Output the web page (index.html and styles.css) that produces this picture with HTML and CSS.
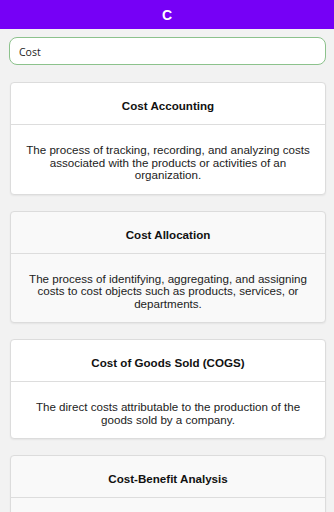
FILE: index.html
```html
<!DOCTYPE html>
<html lang="en">
<head>
<meta charset="utf-8">
<title>C</title>
<link rel="stylesheet" href="styles.css">
</head>
<body>
<header class="topbar">C</header>
<main class="content">
  <div class="search"><input class="search-input" type="text" value="Cost"></div>
  <section class="card">
    <h2 class="card-title">Cost Accounting</h2>
    <p class="card-body">The process of tracking, recording, and analyzing costs associated with the products or activities of an organization.</p>
  </section>
  <section class="card alt">
    <h2 class="card-title">Cost Allocation</h2>
    <p class="card-body">The process of identifying, aggregating, and assigning costs to cost objects such as products, services, or departments.</p>
  </section>
  <section class="card">
    <h2 class="card-title">Cost of Goods Sold (COGS)</h2>
    <p class="card-body">The direct costs attributable to the production of the goods sold by a company.</p>
  </section>
  <section class="card alt">
    <h2 class="card-title">Cost-Benefit Analysis</h2>
    <p class="card-body">A systematic approach to estimating the strengths and weaknesses of alternatives to determine the best option.</p>
  </section>
  <section class="card">
    <h2 class="card-title">Cost Center</h2>
    <p class="card-body">A department or function within an organization that incurs costs but does not directly generate revenue.</p>
  </section>
</main>
</body>
</html>
```
FILE: styles.css
```css
html {
  background: #f2f2f2;
}
html::-webkit-scrollbar {
  width: 5px;
}
html::-webkit-scrollbar-track {
  background: #f2f2f2;
}
html::-webkit-scrollbar-thumb {
  background: #b9b9b9;
  border-left: 2px solid #f2f2f2;
  border-right: 1px solid #f2f2f2;
}
body {
  margin: 0;
  font-family: "Liberation Sans", Arial, sans-serif;
  color: #222;
}
.topbar {
  height: 29px;
  background: #7600f6;
  color: #fff;
  font-weight: bold;
  font-size: 14px;
  display: flex;
  align-items: center;
  justify-content: center;
}
.content {
  padding: 8px 4px 16px 10px;
  display: flex;
  flex-direction: column;
  gap: 16px;
}
.search {
  margin-left: -1px;
  margin-bottom: 1px;
}
.search-input {
  box-sizing: border-box;
  width: 317px;
  height: 28px;
  border: 1px solid #8cc28c;
  border-radius: 8px;
  background: #fff;
  padding: 1px 9px 0;
  font-family: "Open Sans", "Liberation Sans", sans-serif;
  font-size: 10.5px;
  color: #222;
  outline: none;
}
.card {
  width: 316px;
  box-sizing: border-box;
  background: #fff;
  border: 1px solid #dcdcdc;
  border-radius: 4px;
  box-shadow: 0 1px 2px rgba(0, 0, 0, 0.06);
}
.card.alt {
  background: #f9f9f9;
}
.card-title {
  margin: 0;
  padding: 16px 10px 11px;
  font-size: 11.6px;
  line-height: 14px;
  font-weight: bold;
  text-align: center;
  color: #111;
  border-bottom: 1px solid #dddddd;
}
.card-body {
  margin: 0;
  padding: 19px 10px 12px;
  font-size: 11.6px;
  line-height: 12.5px;
  text-align: center;
  color: #222;
}
```
